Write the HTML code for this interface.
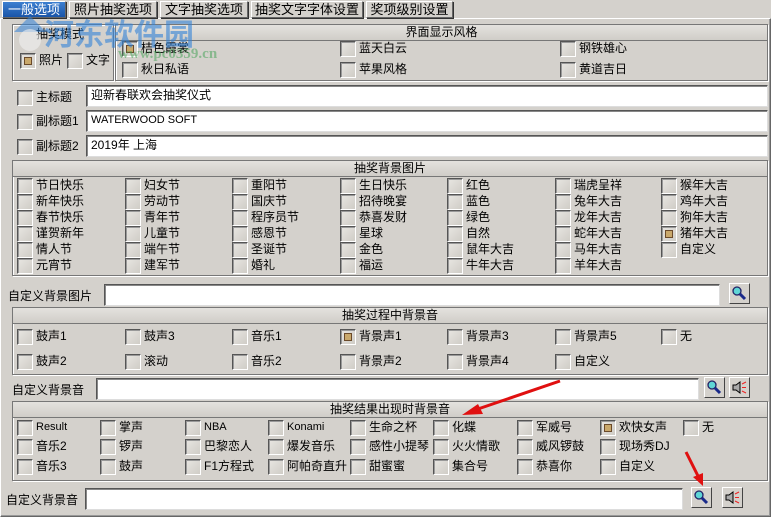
<!DOCTYPE html><html><head><meta charset="utf-8"><style>
*{box-sizing:border-box;margin:0;padding:0}
body{width:771px;height:517px;background:#d4d1cc;position:relative;overflow:hidden;font:12px "Liberation Sans","Noto Sans CJK SC",sans-serif;color:#000}
div,span{position:absolute}
.tab{top:1px;height:17px;border:1px solid #666;border-top-color:#fff;border-left-color:#fff;background:#d4d1cc;font-size:13px;line-height:15px;text-align:center;box-shadow:1px 1px 0 #333}
.grp{border:1px solid #777;box-shadow:inset 1px 1px 0 #fff,1px 1px 0 #fff}
.hd{background:linear-gradient(#e4e2de,#d0cdc8);border-bottom:1px solid #777;text-align:center;line-height:15px;height:16px;font-size:12px}
.c{height:14px;line-height:14px;padding-left:19px;white-space:nowrap}
.c::before{content:"";position:absolute;left:0;top:0;width:14px;height:14px;border:1px solid #555;border-right-color:#fff;border-bottom-color:#fff;background:linear-gradient(135deg,#e8e6e2,#cfccc6);box-shadow:inset 1px 1px 0 #999}
.k::after{content:"";position:absolute;left:4px;top:4px;width:6px;height:6px;border:1px solid #6b4a2a;background:#c9a86b}
.inp{background:#fff;border:1px solid #555;border-right-color:#ddd;border-bottom-color:#ddd;box-shadow:inset 1px 1px 0 #888;padding-left:4px;line-height:19px;font-size:12px}
.btn{width:21px;height:21px;border:1px solid #fff;border-right-color:#444;border-bottom-color:#444;background:#d4d1cc}
</style></head><body>
<div style="left:0;top:18px;width:771px;height:499px;border:1px solid #fff;border-right-color:#666;border-bottom-color:#666;box-shadow:inset -1px -1px 0 #999"></div>
<div class="tab" style="left:2px;width:64px;background:linear-gradient(#3c7fd0,#1a55a8);color:#fff">一般选项</div>
<div class="tab" style="left:69px;width:88px">照片抽奖选项</div>
<div class="tab" style="left:160px;width:88px">文字抽奖选项</div>
<div class="tab" style="left:251px;width:112px">抽奖文字字体设置</div>
<div class="tab" style="left:366px;width:87px">奖项级别设置</div>

<div class="grp" style="left:12px;top:24px;width:102px;height:57px"></div>
<span style="left:36px;top:25px">抽奖模式</span>
<div class="c k" style="left:20px;top:53px">照片</div>
<div class="c" style="left:67px;top:53px">文字</div>

<div class="grp" style="left:115px;top:24px;width:653px;height:57px"><div class="hd" style="position:absolute;left:0;top:0;width:651px">界面显示风格</div></div>
<div class="c k" style="left:122px;top:41px">桔色霞裳</div>
<div class="c" style="left:122px;top:62px">秋日私语</div>
<div class="c" style="left:340px;top:41px">蓝天白云</div>
<div class="c" style="left:340px;top:62px">苹果风格</div>
<div class="c" style="left:560px;top:41px">钢铁雄心</div>
<div class="c" style="left:560px;top:62px">黄道吉日</div>

<div class="c" style="left:17px;top:90px">主标题</div>
<div class="inp" style="left:86px;top:85px;width:682px;height:22px">迎新春联欢会抽奖仪式</div>
<div class="c" style="left:17px;top:114px">副标题1</div>
<div class="inp" style="left:86px;top:110px;width:682px;height:22px;font-size:11px">WATERWOOD SOFT</div>
<div class="c" style="left:17px;top:139px">副标题2</div>
<div class="inp" style="left:86px;top:135px;width:682px;height:22px">2019年 上海</div>

<div class="grp" style="left:12px;top:160px;width:756px;height:116px"><div class="hd" style="position:absolute;left:0;top:0;width:754px">抽奖背景图片</div></div>
<div class="c" style="left:17px;top:178px">节日快乐</div><div class="c" style="left:17px;top:194px">新年快乐</div><div class="c" style="left:17px;top:210px">春节快乐</div><div class="c" style="left:17px;top:226px">谨贺新年</div><div class="c" style="left:17px;top:242px">情人节</div><div class="c" style="left:17px;top:258px">元宵节</div>
<div class="c" style="left:125px;top:178px">妇女节</div><div class="c" style="left:125px;top:194px">劳动节</div><div class="c" style="left:125px;top:210px">青年节</div><div class="c" style="left:125px;top:226px">儿童节</div><div class="c" style="left:125px;top:242px">端午节</div><div class="c" style="left:125px;top:258px">建军节</div>
<div class="c" style="left:232px;top:178px">重阳节</div><div class="c" style="left:232px;top:194px">国庆节</div><div class="c" style="left:232px;top:210px">程序员节</div><div class="c" style="left:232px;top:226px">感恩节</div><div class="c" style="left:232px;top:242px">圣诞节</div><div class="c" style="left:232px;top:258px">婚礼</div>
<div class="c" style="left:340px;top:178px">生日快乐</div><div class="c" style="left:340px;top:194px">招待晚宴</div><div class="c" style="left:340px;top:210px">恭喜发财</div><div class="c" style="left:340px;top:226px">星球</div><div class="c" style="left:340px;top:242px">金色</div><div class="c" style="left:340px;top:258px">福运</div>
<div class="c" style="left:447px;top:178px">红色</div><div class="c" style="left:447px;top:194px">蓝色</div><div class="c" style="left:447px;top:210px">绿色</div><div class="c" style="left:447px;top:226px">自然</div><div class="c" style="left:447px;top:242px">鼠年大吉</div><div class="c" style="left:447px;top:258px">牛年大吉</div>
<div class="c" style="left:555px;top:178px">瑞虎呈祥</div><div class="c" style="left:555px;top:194px">兔年大吉</div><div class="c" style="left:555px;top:210px">龙年大吉</div><div class="c" style="left:555px;top:226px">蛇年大吉</div><div class="c" style="left:555px;top:242px">马年大吉</div><div class="c" style="left:555px;top:258px">羊年大吉</div>
<div class="c" style="left:661px;top:178px">猴年大吉</div><div class="c" style="left:661px;top:194px">鸡年大吉</div><div class="c" style="left:661px;top:210px">狗年大吉</div><div class="c k" style="left:661px;top:226px">猪年大吉</div><div class="c" style="left:661px;top:242px">自定义</div>

<span style="left:8px;top:287px">自定义背景图片</span>
<div class="inp" style="left:104px;top:284px;width:616px;height:22px"></div>
<div class="btn" style="left:729px;top:283px"><svg width="19" height="19" style="position:absolute;left:0;top:0"><circle cx="7" cy="7" r="4" fill="#5fd6d6" stroke="#226" stroke-width="1.3"/><line x1="10" y1="10" x2="15" y2="15" stroke="#1a2a8a" stroke-width="3"/></svg></div>

<div class="grp" style="left:12px;top:307px;width:756px;height:68px"><div class="hd" style="position:absolute;left:0;top:0;width:754px">抽奖过程中背景音</div></div>
<div class="c" style="left:17px;top:329px">鼓声1</div><div class="c" style="left:17px;top:354px">鼓声2</div>
<div class="c" style="left:125px;top:329px">鼓声3</div><div class="c" style="left:125px;top:354px">滚动</div>
<div class="c" style="left:232px;top:329px">音乐1</div><div class="c" style="left:232px;top:354px">音乐2</div>
<div class="c k" style="left:340px;top:329px">背景声1</div><div class="c" style="left:340px;top:354px">背景声2</div>
<div class="c" style="left:447px;top:329px">背景声3</div><div class="c" style="left:447px;top:354px">背景声4</div>
<div class="c" style="left:555px;top:329px">背景声5</div><div class="c" style="left:555px;top:354px">自定义</div>
<div class="c" style="left:661px;top:329px">无</div>

<span style="left:12px;top:381px">自定义背景音</span>
<div class="inp" style="left:96px;top:378px;width:603px;height:22px"></div>
<div class="btn" style="left:704px;top:377px"><svg width="19" height="19" style="position:absolute;left:0;top:0"><circle cx="7" cy="7" r="4" fill="#5fd6d6" stroke="#226" stroke-width="1.3"/><line x1="10" y1="10" x2="15" y2="15" stroke="#1a2a8a" stroke-width="3"/></svg></div>
<div class="btn" style="left:729px;top:377px"><svg width="19" height="19" style="position:absolute;left:0;top:0"><path d="M3 7h3l4-3v11l-4-3H3z" fill="#aaa" stroke="#000"/><path d="M12 6l4-2M12 9.5h4M12 13l4 2" stroke="#e22"/></svg></div>

<div class="grp" style="left:12px;top:401px;width:756px;height:80px"><div class="hd" style="position:absolute;left:0;top:0;width:754px">抽奖结果出现时背景音</div></div>
<div class="c" style="left:17px;top:420px;font-size:11px">Result</div><div class="c" style="left:17px;top:439px">音乐2</div><div class="c" style="left:17px;top:459px">音乐3</div>
<div class="c" style="left:100px;top:420px">掌声</div><div class="c" style="left:100px;top:439px">锣声</div><div class="c" style="left:100px;top:459px">鼓声</div>
<div class="c" style="left:185px;top:420px;font-size:11px">NBA</div><div class="c" style="left:185px;top:439px">巴黎恋人</div><div class="c" style="left:185px;top:459px">F1方程式</div>
<div class="c" style="left:268px;top:420px;font-size:11px">Konami</div><div class="c" style="left:268px;top:439px">爆发音乐</div><div class="c" style="left:268px;top:459px">阿帕奇直升</div>
<div class="c" style="left:350px;top:420px">生命之杯</div><div class="c" style="left:350px;top:439px">感性小提琴</div><div class="c" style="left:350px;top:459px">甜蜜蜜</div>
<div class="c" style="left:433px;top:420px">化蝶</div><div class="c" style="left:433px;top:439px">火火情歌</div><div class="c" style="left:433px;top:459px">集合号</div>
<div class="c" style="left:517px;top:420px">军威号</div><div class="c" style="left:517px;top:439px">威风锣鼓</div><div class="c" style="left:517px;top:459px">恭喜你</div>
<div class="c k" style="left:600px;top:420px">欢快女声</div><div class="c" style="left:600px;top:439px">现场秀DJ</div><div class="c" style="left:600px;top:459px">自定义</div>
<div class="c" style="left:683px;top:420px">无</div>

<span style="left:6px;top:491px">自定义背景音</span>
<div class="inp" style="left:85px;top:488px;width:598px;height:22px"></div>
<div class="btn" style="left:691px;top:487px"><svg width="19" height="19" style="position:absolute;left:0;top:0"><circle cx="7" cy="7" r="4" fill="#5fd6d6" stroke="#226" stroke-width="1.3"/><line x1="10" y1="10" x2="15" y2="15" stroke="#1a2a8a" stroke-width="3"/></svg></div>
<div class="btn" style="left:722px;top:487px"><svg width="19" height="19" style="position:absolute;left:0;top:0"><path d="M3 7h3l4-3v11l-4-3H3z" fill="#aaa" stroke="#000"/><path d="M12 6l4-2M12 9.5h4M12 13l4 2" stroke="#e22"/></svg></div>

<span style="left:44px;top:10px;font:bold 30px 'Noto Sans CJK SC',sans-serif;color:rgba(50,130,215,.6)">河东软件园</span>
<span style="left:118px;top:46px;font:bold 15px 'Liberation Serif',serif;color:rgba(60,160,80,.5)">www.pc0359.cn</span>
<svg width="40" height="40" style="position:absolute;left:10px;top:14px"><path d="M20 2L36 18H4z" fill="rgba(50,130,215,.55)"/><circle cx="20" cy="26" r="11" fill="rgba(240,240,240,.6)"/></svg>

<svg width="771" height="517" style="position:absolute;left:0;top:0">
<path d="M560 381L475 410" stroke="#e01010" stroke-width="3"/><path d="M462 415l16-11 5 10z" fill="#e01010"/>
<path d="M686 452L699 478" stroke="#e01010" stroke-width="3"/><path d="M703 486l-10-9 10-4z" fill="#e01010"/>
</svg>
</body></html>
